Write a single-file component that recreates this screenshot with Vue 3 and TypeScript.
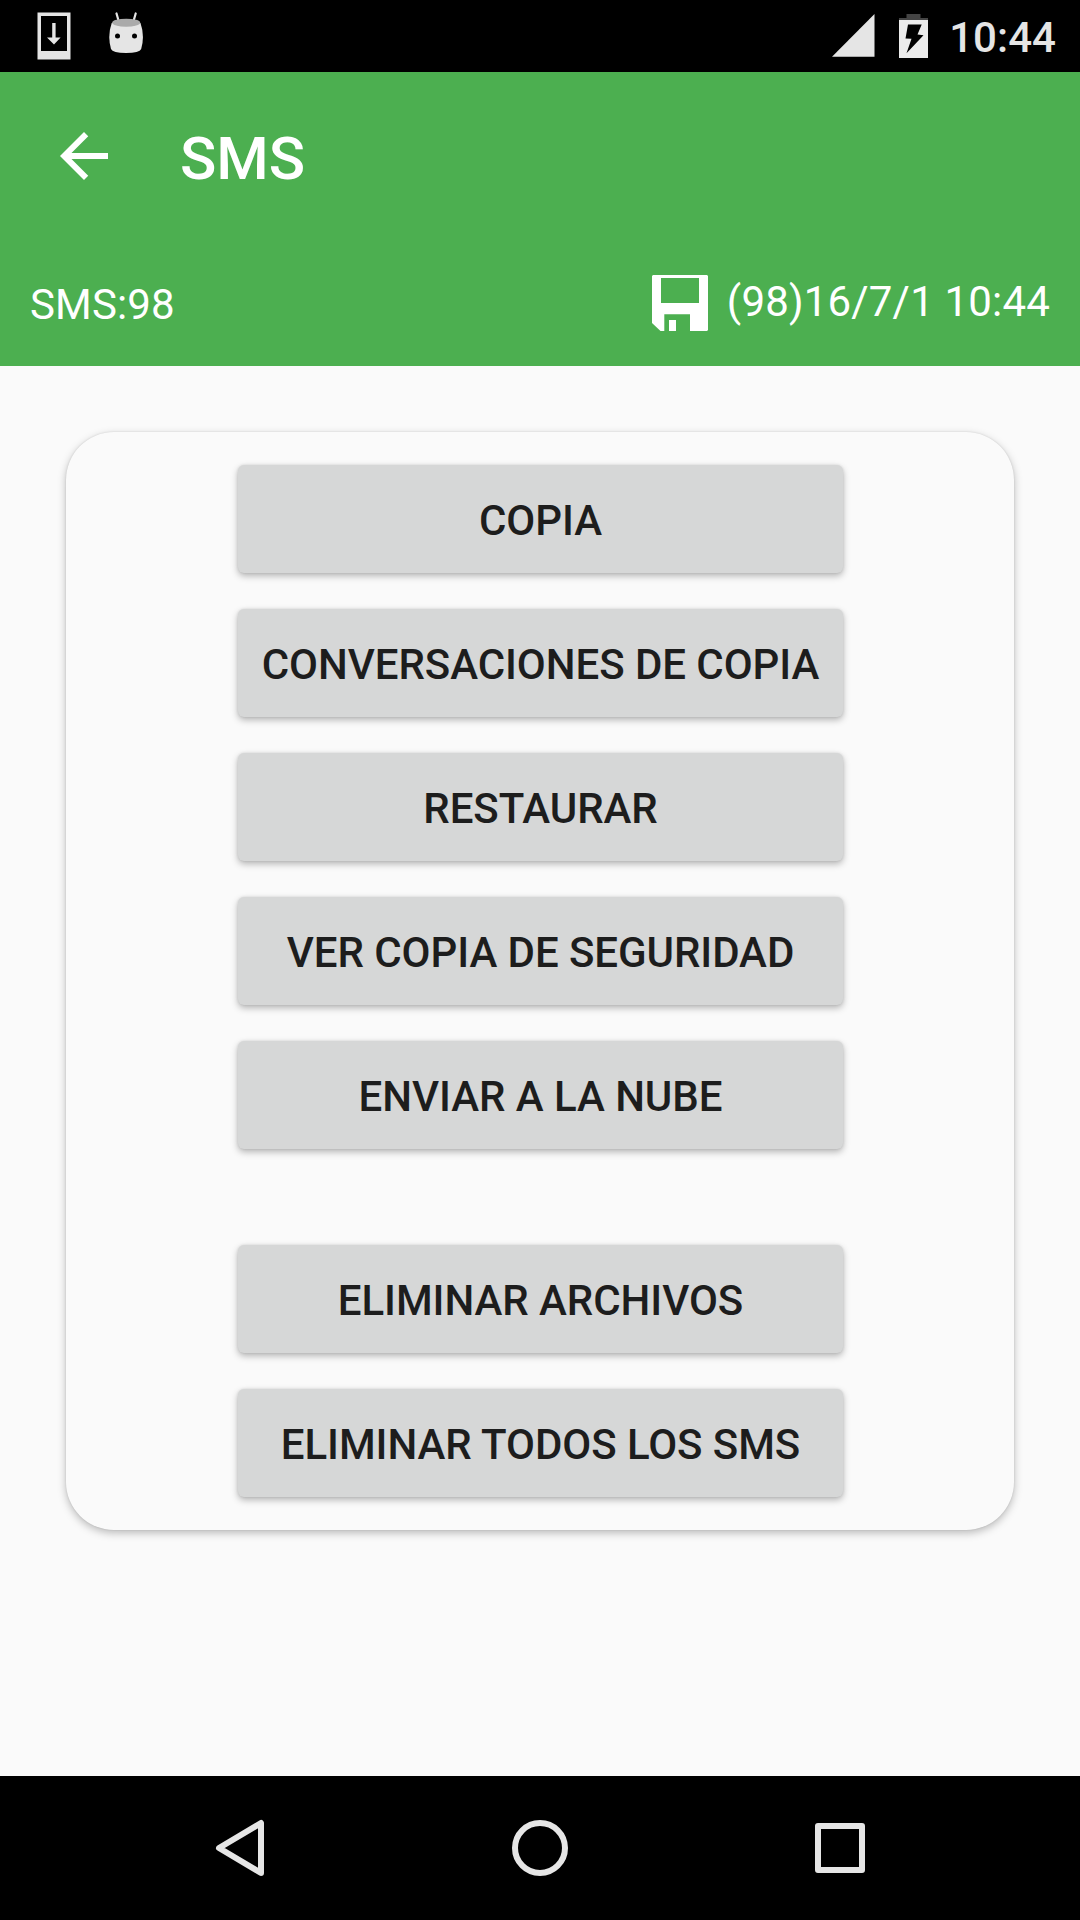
<script setup lang="ts">
interface ActionGroup {
  id: string
  labels: string[]
}

const groups: ActionGroup[] = [
  {
    id: 'backup',
    labels: ['Copia', 'Conversaciones de copia', 'Restaurar', 'Ver copia de seguridad', 'Enviar a la nube'],
  },
  { id: 'delete', labels: ['Eliminar archivos', 'Eliminar todos los SMS'] },
]
</script>

<template>
  <div class="screen">
    <header class="status">
      <div class="notifications">
        <svg width="34" height="48" viewBox="0 0 34 48">
          <path fill="#e5e5e5" fill-rule="evenodd" d="M.5.5h33v47H.5zM4 4v35h26V4z" />
          <path fill="#e5e5e5" d="M15.200 11h3.400v14.500h5L17 32.500l-7-7h5.200z" />
        </svg>
        <svg width="36" height="42" viewBox="0 0 36 42">
          <path d="M8.500 1.500l2.300 8M27.700 1.500l-2.300 8" stroke="#e5e5e5" stroke-width="2.200" stroke-linecap="round" />
          <path fill="#e5e5e5" d="M3.700 11Q18 5 32.500 11Q37 24 33.200 37Q31.500 41 18 41Q4.700 41 3 37Q-.8 24 3.700 11z" />
          <ellipse cx="18.200" cy="10.700" rx="14" ry="4" fill="#aaa" />
          <circle cx="9.500" cy="24" r="2.500" />
          <circle cx="26.500" cy="24" r="2.500" />
        </svg>
      </div>
      <div class="system">
        <svg class="signal" width="43" height="43" viewBox="0 0 43 43">
          <path fill="#e5e5e5" d="M42.500 0v42.700H0z" />
        </svg>
        <svg class="battery" width="29" height="44" viewBox="0 0 29 44">
          <path fill="#444" d="M7.500 0h14v4H29v3H0V4h7.500z" />
          <path fill="#ebebeb" d="M0 6h29v38H0z" />
          <path d="M9 10.500h13.700L18.500 20.500l6 .8L7.500 39.300l5-14.500-6-.4z" />
        </svg>
        <span class="clock">10:44</span>
      </div>
    </header>

    <section class="appbar">
      <div class="toolbar">
        <svg width="72" height="72" viewBox="0 0 24 24">
          <path fill="#fff" d="M20 11H7.830l5.590-5.590L12 4l-8 8 8 8 1.410-1.410L7.830 13H20z" />
        </svg>
        <h1 class="title">SMS</h1>
      </div>
      <div class="summary">
        <span class="count">SMS:98</span>
        <div class="last">
          <svg width="56" height="56" viewBox="0 0 56 56">
            <path
              fill="#fff"
              fill-rule="evenodd"
              d="M1 0h54l1 1v54l-1 1H38V39.300H12.300V56H8.500L0 48V1zM9 3v25h38V3zM17 45h7v11h-7z"
            />
          </svg>
          <span class="stamp">(98)16/7/1 10:44</span>
        </div>
      </div>
    </section>

    <main class="content">
      <div class="card">
        <div v-for="group in groups" :key="group.id" class="group">
          <button v-for="label in group.labels" :key="label" class="action" type="button">{{ label }}</button>
        </div>
      </div>
    </main>

    <nav class="navbar">
      <svg width="60" height="60" viewBox="0 0 60 60">
        <path d="M51 5v50L9 30z" class="stroke" />
      </svg>
      <svg width="60" height="60" viewBox="0 0 60 60">
        <circle cx="30" cy="30" r="25" class="stroke" />
      </svg>
      <svg width="60" height="60" viewBox="0 0 60 60">
        <rect x="8" y="8" width="44" height="44" class="stroke" />
      </svg>
    </nav>
  </div>
</template>

<style>
body {
  margin: 0;
}
</style>

<style scoped>
.screen {
  width: 1080px;
  height: 1920px;
  display: flex;
  flex-direction: column;
  background: #fafafa;
  font-family: Roboto, sans-serif;
  font-size: 42px;
  overflow: hidden;
}
svg {
  display: block;
  flex: none;
}
.status {
  height: 72px;
  flex: none;
  box-sizing: border-box;
  padding: 12px 24px 0 37px;
  display: flex;
  justify-content: space-between;
  background: #000;
}
.notifications {
  display: flex;
  gap: 37px;
}
.system {
  display: flex;
}
.signal {
  margin: 2px 24px 0 0;
}
.battery {
  margin: 2px 21px 0 0;
}
.clock {
  margin-top: 1px;
  color: #e5e5e5;
  font-weight: 500;
  line-height: 50px;
  letter-spacing: 0.05px;
}
.appbar {
  height: 294px;
  flex: none;
  background: #4caf50;
  color: #fff;
}
.toolbar {
  height: 168px;
  padding-left: 48px;
  display: flex;
  align-items: center;
  gap: 60px;
}
.title {
  margin: 6px 0 0;
  font-size: 60px;
  line-height: 70px;
  font-weight: 500;
}
.summary {
  padding: 35px 30px 0;
  display: flex;
  justify-content: space-between;
  line-height: 50px;
}
.count {
  margin-top: 5px;
  letter-spacing: 0.16px;
}
.last {
  display: flex;
  gap: 19px;
}
.stamp {
  margin-top: 2px;
  letter-spacing: 0.18px;
}
.content {
  flex: 1;
  padding: 66px 66px 0;
}
.card {
  height: 1098px;
  box-sizing: border-box;
  padding: 33px 0 33px 1px;
  display: flex;
  flex-direction: column;
  align-items: center;
  gap: 96px;
  border-radius: 48px;
  background: #fafafa;
  box-shadow: 0 3px 8px rgba(0, 0, 0, 0.26), 0 0 2px rgba(0, 0, 0, 0.12);
}
.group {
  display: flex;
  flex-direction: column;
  gap: 36px;
}
.action {
  width: 605px;
  height: 108px;
  border: 0;
  padding: 4px 0 0;
  border-radius: 6px;
  background: #d6d7d7;
  box-shadow: 0 3px 7px rgba(0, 0, 0, 0.28), 0 0 3px rgba(0, 0, 0, 0.1);
  color: #1d1d1d;
  font-family: inherit;
  font-size: 42px;
  font-weight: 500;
  line-height: 50px;
  letter-spacing: -0.06px;
  text-transform: uppercase;
  white-space: nowrap;
}
.navbar {
  height: 144px;
  flex: none;
  display: flex;
  justify-content: center;
  align-items: center;
  gap: 240px;
  background: #000;
}
.stroke {
  fill: none;
  stroke: #e6e6e6;
  stroke-width: 6;
  stroke-linejoin: round;
}
</style>
